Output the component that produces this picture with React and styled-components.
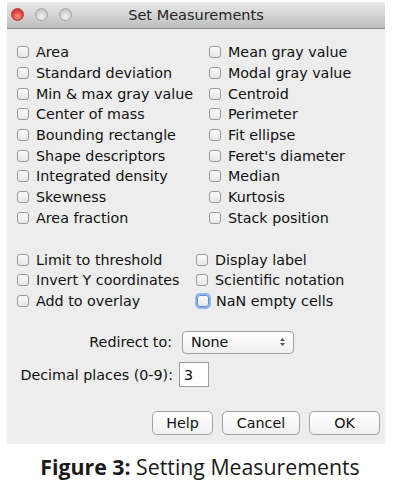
import styled, { createGlobalStyle } from 'styled-components'

const Global = createGlobalStyle`
  body {
    margin: 0;
    background: #ffffff;
  }
`

const Page = styled.div`
  width: 400px;
  height: 490px;
  padding-top: 2px;
  box-sizing: border-box;
`

const Window = styled.div`
  margin-left: 7px;
  width: 378px;
  background: #ededed;
  font-family: "DejaVu Sans", sans-serif;
  font-size: 14.3px;
  color: #111111;
`

const TitleBar = styled.div`
  position: relative;
  height: 26px;
  display: flex;
  align-items: center;
  justify-content: center;
  background: linear-gradient(#e9e9e9, #cfcfcf 60%, #bdbdbd);
  border-bottom: 1px solid #8d8d8d;
  font-size: 14.5px;
  color: #262626;
`

const Lights = styled.div`
  position: absolute;
  left: 4px;
  top: 6px;
  display: flex;
  gap: 11px;
`

const Light = styled.span`
  width: 13px;
  height: 13px;
  border-radius: 50%;
  box-sizing: border-box;
  border: 1px solid ${({ red }) => (red ? '#b23a33' : '#a5a5a5')};
  background: ${({ red }) =>
    red
      ? 'radial-gradient(circle at 50% 70%, #ff8d83, #e0463e 55%, #b52c26)'
      : 'radial-gradient(circle at 50% 70%, #f2f2f2, #d0d0d0 60%, #b4b4b4)'};
`

const Body = styled.div`
  padding: 13px 10px 9px 10px;
`

const Grid = styled.div`
  display: grid;
  grid-template-columns: ${({ split }) => split}px 1fr;
  grid-auto-rows: 20.7px;
  margin-bottom: ${({ after }) => after}px;
`

const Item = styled.label`
  display: flex;
  align-items: center;
  gap: 7px;
  white-space: nowrap;
`

const Box = styled.span`
  flex: none;
  width: 12px;
  height: 12px;
  box-sizing: border-box;
  border-radius: 3px;
  border: 1px solid ${({ focus }) => (focus ? '#5a8fd0' : '#9a9a9a')};
  background: linear-gradient(#fbfbfb, #e6e6e6);
  box-shadow: ${({ focus }) => (focus ? '0 0 0 2px #8fb8e8' : 'none')};
  margin-left: ${({ focus }) => (focus ? '1px' : '0')};
`

const FieldRow = styled.div`
  display: flex;
  align-items: center;
  height: ${({ h }) => h}px;
  margin-top: ${({ top }) => top || 0}px;
`

const Label = styled.span`
  width: ${({ w }) => w}px;
  text-align: right;
  padding-right: ${({ pr }) => pr}px;
  box-sizing: border-box;
  white-space: nowrap;
`

const Select = styled.div`
  width: 112px;
  height: 23px;
  box-sizing: border-box;
  border: 1px solid #a0a0a0;
  border-radius: 4px;
  background: linear-gradient(#ffffff, #f0f0f0);
  display: flex;
  align-items: center;
  justify-content: space-between;
  padding: 0 7px 0 8px;
`

const Input = styled.div`
  width: 30px;
  height: 25px;
  box-sizing: border-box;
  border: 1px solid #9c9c9c;
  background: #ffffff;
  display: flex;
  align-items: center;
  padding-left: 4px;
`

const Buttons = styled.div`
  display: flex;
  justify-content: flex-end;
  gap: 9px;
  margin-top: 24px;
  margin-right: -5px;
`

const Button = styled.div`
  width: ${({ w }) => w}px;
  height: 24px;
  box-sizing: border-box;
  border: 1px solid #a2a2a2;
  border-radius: 5px;
  background: linear-gradient(#ffffff, #f1f1f1);
  display: flex;
  align-items: center;
  justify-content: center;
`

const Caption = styled.div`
  margin-top: 8px;
  text-align: center;
  font-family: "Open Sans", sans-serif;
  font-size: 21.3px;
  color: #1a1a1a;
  b {
    font-weight: 700;
  }
`

const Arrows = () => (
  <svg width="7" height="10" viewBox="0 0 7 10">
    <path d="M1 4 L3.5 1 L6 4 Z M1 6 L3.5 9 L6 6 Z" fill="#555" />
  </svg>
)

const left = [
  'Area',
  'Standard deviation',
  'Min & max gray value',
  'Center of mass',
  'Bounding rectangle',
  'Shape descriptors',
  'Integrated density',
  'Skewness',
  'Area fraction',
]
const right = [
  'Mean gray value',
  'Modal gray value',
  'Centroid',
  'Perimeter',
  'Fit ellipse',
  "Feret's diameter",
  'Median',
  'Kurtosis',
  'Stack position',
]

const left2 = ['Limit to threshold', 'Invert Y coordinates', 'Add to overlay']
const right2 = ['Display label', 'Scientific notation', 'NaN empty cells']

const interleave = (a, b) => a.flatMap((t, i) => [t, b[i]])

const App = () => {
  return (
    <Page>
      <Global />
      <Window>
        <TitleBar>
          <Lights>
            <Light red />
            <Light />
            <Light />
          </Lights>
          Set Measurements
        </TitleBar>
        <Body>
          <Grid split={192} after={21}>
            {interleave(left, right).map((t) => (
              <Item key={t}>
                <Box />
                {t}
              </Item>
            ))}
          </Grid>
          <Grid split={179} after={19}>
            {interleave(left2, right2).map((t) => (
              <Item key={t}>
                <Box focus={t === 'NaN empty cells'} />
                {t}
              </Item>
            ))}
          </Grid>
          <FieldRow h={24}>
            <Label w={165} pr={10}>Redirect to:</Label>
            <Select>
              None
              <Arrows />
            </Select>
          </FieldRow>
          <FieldRow h={25} top={8}>
            <Label w={162} pr={6}>Decimal places (0-9):</Label>
            <Input>3</Input>
          </FieldRow>
          <Buttons>
            <Button w={61}>Help</Button>
            <Button w={78}>Cancel</Button>
            <Button w={71}>OK</Button>
          </Buttons>
        </Body>
      </Window>
      <Caption>
        <b>Figure 3:</b> Setting Measurements
      </Caption>
    </Page>
  )
}

export default App
